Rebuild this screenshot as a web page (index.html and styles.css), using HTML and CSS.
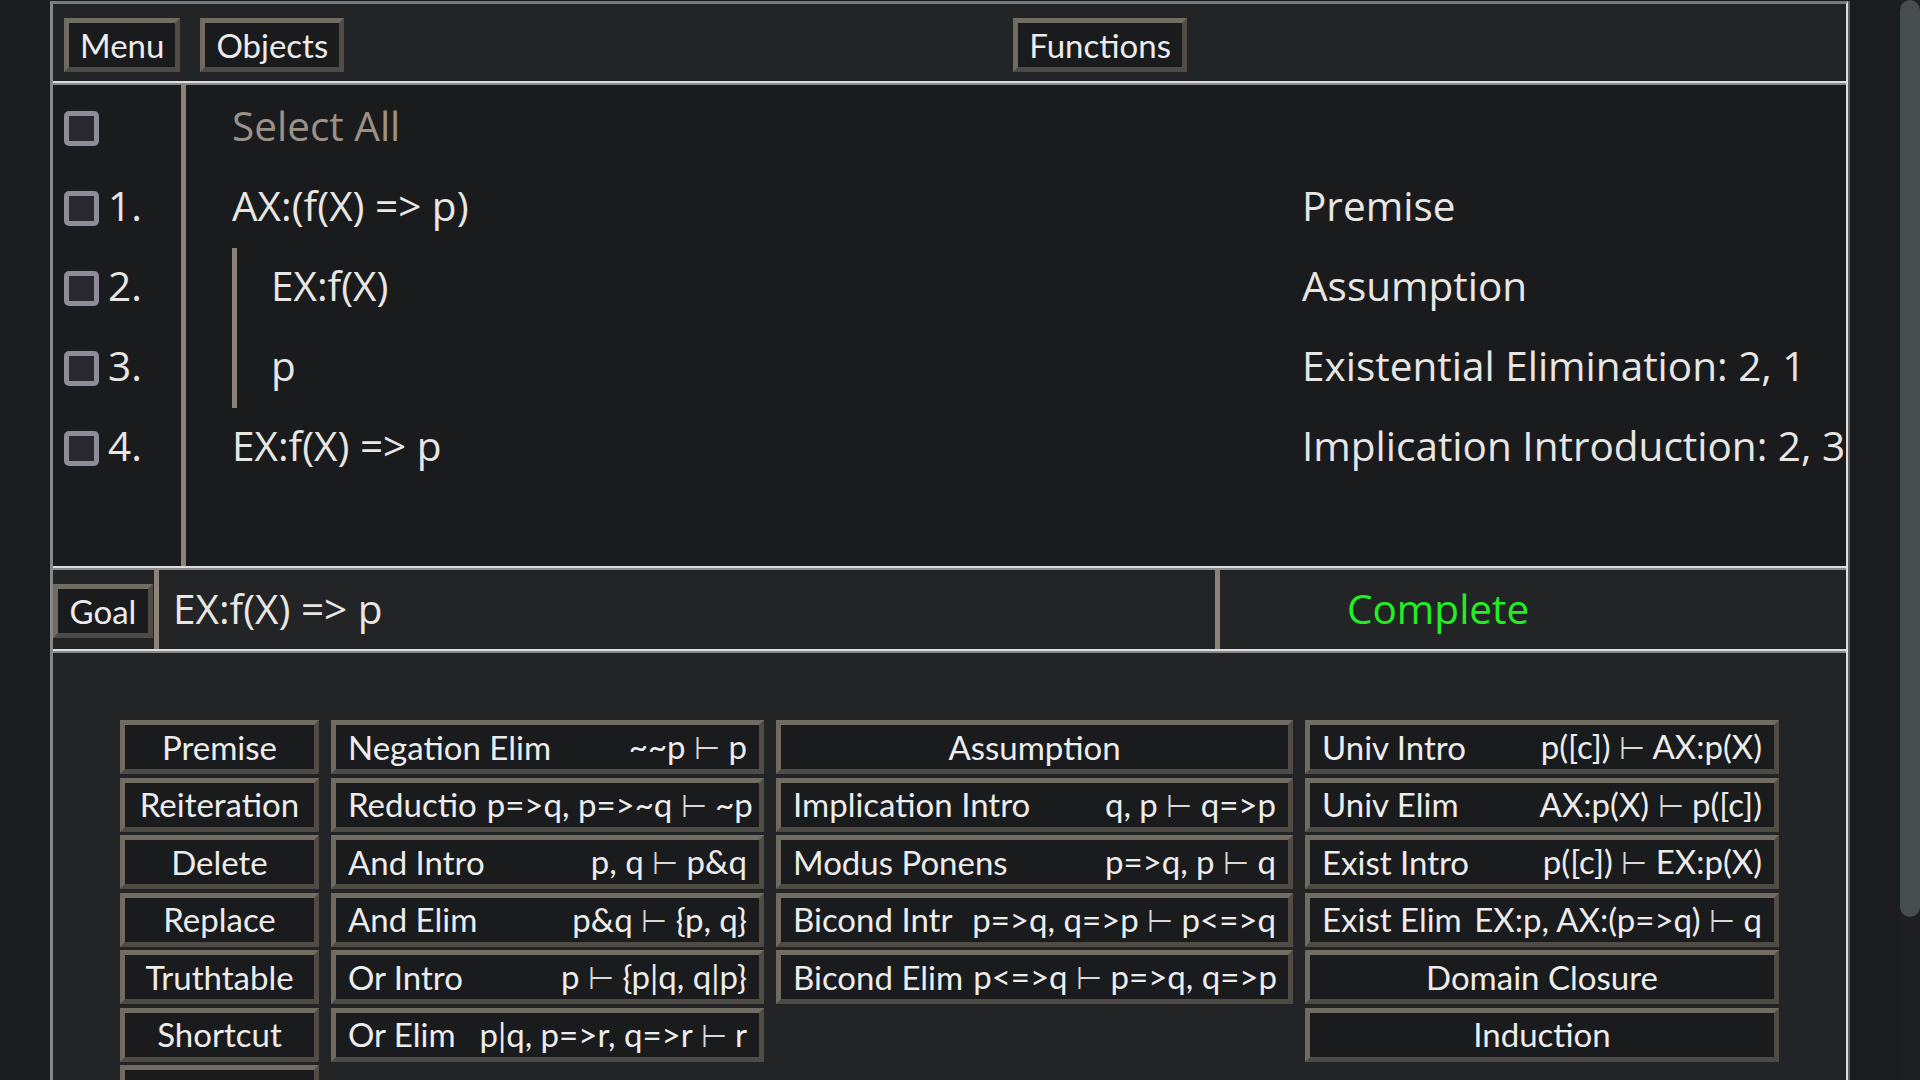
FILE: index.html
```html
<!DOCTYPE html>
<html lang="en">
<head>
<meta charset="utf-8">
<title>Proof</title>
<link rel="stylesheet" href="styles.css">
</head>
<body>
<div class="page">
  <div class="app">
    <header class="topbar">
      <div class="left-group">
        <button class="btn">Menu</button>
        <button class="btn">Objects</button>
      </div>
      <div class="center-group">
        <button class="btn">Functions</button>
      </div>
    </header>

    <section class="proof">
      <div class="nums">
        <div class="num-row"><span class="cb"></span></div>
        <div class="num-row"><span class="cb"></span><span class="num">1.</span></div>
        <div class="num-row"><span class="cb"></span><span class="num">2.</span></div>
        <div class="num-row"><span class="cb"></span><span class="num">3.</span></div>
        <div class="num-row"><span class="cb"></span><span class="num">4.</span></div>
      </div>
      <div class="formulas">
        <div class="row"><div class="cell select-all">Select All</div><div class="cell"></div></div>
        <div class="row"><div class="cell">AX:(f(X) =&gt; p)</div><div class="cell">Premise</div></div>
        <div class="row"><div class="cell sub">EX:f(X)</div><div class="cell">Assumption</div></div>
        <div class="row"><div class="cell sub">p</div><div class="cell">Existential Elimination: 2, 1</div></div>
        <div class="row"><div class="cell">EX:f(X) =&gt; p</div><div class="cell">Implication Introduction: 2, 3</div></div>
      </div>
    </section>

    <section class="goal">
      <button class="btn goal-btn">Goal</button>
      <div class="goal-formula">EX:f(X) =&gt; p</div>
      <div class="goal-status">Complete</div>
    </section>

    <section class="rules">
      <div class="rules-cols">
        <div class="col col1">
          <button class="btn rule center">Premise</button>
          <button class="btn rule center">Reiteration</button>
          <button class="btn rule center">Delete</button>
          <button class="btn rule center">Replace</button>
          <button class="btn rule center">Truthtable</button>
          <button class="btn rule center">Shortcut</button>
          <button class="btn rule center">Clear</button>
        </div>
        <div class="col col2">
          <button class="btn rule"><span>Negation Elim</span><span>~~p <span class="ts">⊢</span> p</span></button>
          <button class="btn rule"><span>Reductio</span><span>p=&gt;q, p=&gt;~q <span class="ts">⊢</span> ~p</span></button>
          <button class="btn rule"><span>And Intro</span><span>p, q <span class="ts">⊢</span> p&amp;q</span></button>
          <button class="btn rule"><span>And Elim</span><span>p&amp;q <span class="ts">⊢</span> {p, q}</span></button>
          <button class="btn rule"><span>Or Intro</span><span>p <span class="ts">⊢</span> {p|q, q|p}</span></button>
          <button class="btn rule"><span>Or Elim</span><span>p|q, p=&gt;r, q=&gt;r <span class="ts">⊢</span> r</span></button>
        </div>
        <div class="col col3">
          <button class="btn rule center">Assumption</button>
          <button class="btn rule"><span>Implication Intro</span><span>q, p <span class="ts">⊢</span> q=&gt;p</span></button>
          <button class="btn rule"><span>Modus Ponens</span><span>p=&gt;q, p <span class="ts">⊢</span> q</span></button>
          <button class="btn rule"><span>Bicond Intr</span><span>p=&gt;q, q=&gt;p <span class="ts">⊢</span> p&lt;=&gt;q</span></button>
          <button class="btn rule"><span>Bicond Elim</span><span>p&lt;=&gt;q <span class="ts">⊢</span> p=&gt;q, q=&gt;p</span></button>
        </div>
        <div class="col col4">
          <button class="btn rule"><span>Univ Intro</span><span>p([c]) <span class="ts">⊢</span> AX:p(X)</span></button>
          <button class="btn rule"><span>Univ Elim</span><span>AX:p(X) <span class="ts">⊢</span> p([c])</span></button>
          <button class="btn rule"><span>Exist Intro</span><span>p([c]) <span class="ts">⊢</span> EX:p(X)</span></button>
          <button class="btn rule"><span>Exist Elim</span><span>EX:p, AX:(p=&gt;q) <span class="ts">⊢</span> q</span></button>
          <button class="btn rule center">Domain Closure</button>
          <button class="btn rule center">Induction</button>
        </div>
      </div>
    </section>
  </div>
  <div class="scrollbar"><div class="thumb"></div></div>
</div>
</body>
</html>
```
FILE: styles.css
```css
* { box-sizing: border-box; }

html, body {
  margin: 0;
  height: 1080px;
  overflow: hidden;
  background: #1b1c1e;
}

body {
  font-family: "Open Sans", "Noto Sans", sans-serif;
  color: #e8e6e3;
}

.page {
  display: flex;
  justify-content: space-between;
  align-items: flex-start;
  height: 1080px;
  padding-left: 50px;
}

.app {
  width: 1798px;
  margin-top: 1px;
  border-left: 3px solid #878787;
  border-top: 3px solid #7a7a7a;
  border-right: 2px solid #dedede;
  box-shadow: 2px 0 0 #5e5e5e;
}

.scrollbar {
  width: 20px;
  height: 1080px;
  background: #1e1f21;
}

.thumb {
  height: 917px;
  background: #474c4f;
  border-radius: 10px;
}

/* buttons */
.btn {
  font-family: Lato, "DejaVu Sans", sans-serif;
  font-size: 33px;
  color: #ececec;
  background: #1a1b1d;
  border: 5px solid;
  border-color: #726d63 #504b45 #4e4a44 #706b61;
  height: 54px;
  padding: 0 11px;
  line-height: 1;
  display: flex;
  align-items: center;
  justify-content: center;
  white-space: nowrap;
  margin: 0;
}

.ts {
  font-family: "DejaVu Sans", sans-serif;
  font-weight: 200;
  font-size: 30px;
  color: #d8d8d8;
}

/* header */
.topbar {
  display: flex;
  background: #232426;
  padding: 14px 0 9px 11px;
  border-bottom: 2px solid #dcdcdc;
}

.left-group {
  display: flex;
  gap: 20px;
}

.center-group {
  flex: 1;
  display: flex;
  justify-content: center;
  margin-left: 10px;
}

/* proof */
.proof {
  display: flex;
  background: #1a1b1d;
  border-top: 2px solid #8a8a8a;
  border-bottom: 2px solid #dcdcdc;
  font-size: 40.5px;
}

.nums {
  width: 133px;
  border-right: 5px solid #8b8378;
  padding: 3px 0 78px 11px;
}

.num-row {
  height: 80px;
  display: flex;
  align-items: center;
  gap: 9px;
}

.cb {
  width: 35px;
  height: 35px;
  border: 5px solid #8f8c99;
  border-radius: 5px;
  background: #29272f;
  flex: none;
}

.num {
  line-height: 1;
  margin-top: -4px;
}

.formulas {
  flex: 1;
  padding: 3px 0 78px 46px;
}

.row {
  height: 80px;
  display: grid;
  grid-template-columns: 1070px 1fr;
}

.cell {
  display: flex;
  align-items: center;
  white-space: nowrap;
  padding-bottom: 6px;
}

.select-all {
  color: #9a9286;
}

.sub {
  border-left: 5px solid #8b8378;
  padding-left: 34px;
}

/* goal */
.goal {
  display: flex;
  height: 83px;
  background: #232426;
  border-top: 2px solid #8a8a8a;
  border-bottom: 2px solid #dcdcdc;
  font-size: 40.5px;
}

.goal-btn {
  margin-top: 14px;
  width: 100px;
}

.goal-formula {
  margin-left: 1px;
  width: 1061px;
  border-left: 5px solid #8b8378;
  padding-left: 14px;
  display: flex;
  align-items: center;
  padding-bottom: 3px;
}

.goal-status {
  flex: 1;
  border-left: 5px solid #8b8378;
  padding-left: 127px;
  display: flex;
  align-items: center;
  color: #22ee22;
  padding-bottom: 3px;
}

/* rules */
.rules {
  background: #232426;
  border-top: 2px solid #8a8a8a;
  padding-top: 67px;
  height: 500px;
}

.rules-cols {
  display: flex;
  justify-content: center;
  gap: 12px;
}

.col {
  display: flex;
  flex-direction: column;
  gap: 3.5px;
}

.col1 { width: 199px; }
.col2 { width: 433px; }
.col3 { width: 517px; }
.col4 { width: 474px; }

.rule {
  width: 100%;
  justify-content: space-between;
  padding: 0 12px;
  gap: 10px;
}

.rule.center {
  justify-content: center;
}
```
